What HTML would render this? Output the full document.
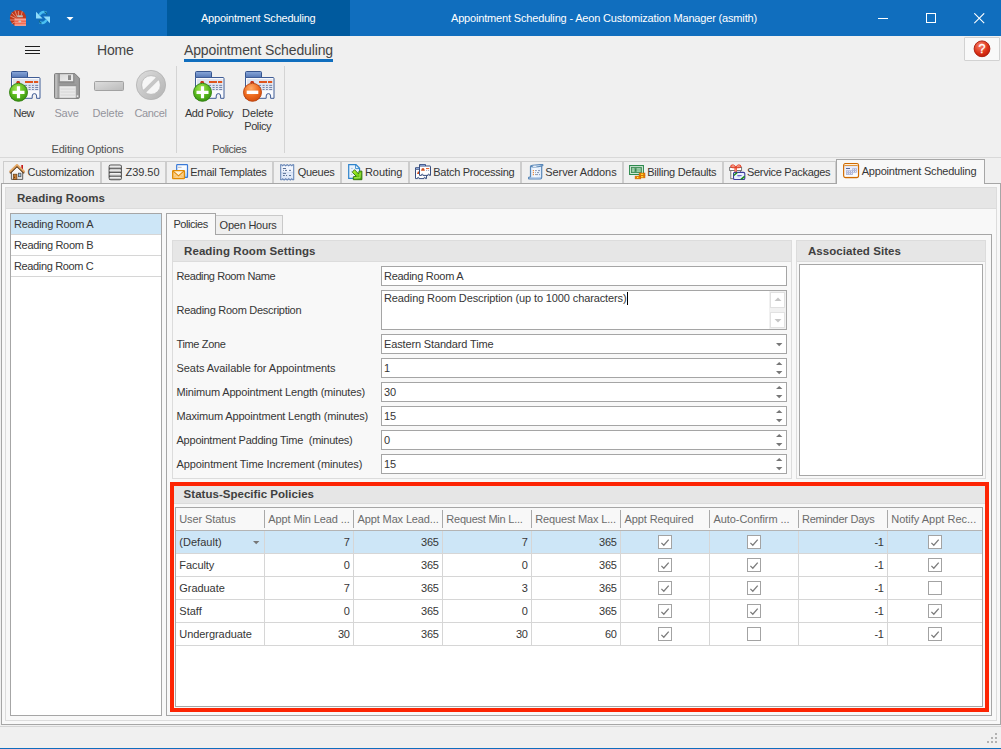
<!DOCTYPE html>
<html><head><meta charset="utf-8"><title>Aeon Customization Manager</title>
<style>
*{box-sizing:border-box;margin:0;padding:0}
html,body{width:1001px;height:749px;overflow:hidden;background:#f0f0f0;font-family:"Liberation Sans",sans-serif;font-size:11px;color:#363636;letter-spacing:-0.18px}
.a{position:absolute}
.t{position:absolute;white-space:pre;line-height:14px}
.w{color:#fff}
.lbl{position:absolute;white-space:nowrap;line-height:14px;text-align:center;transform:translateX(-50%)}
.dis{color:#94949c}
.cap{color:#505050}
.dtab{position:absolute;top:161px;height:22px;border:1px solid #cdcdcd;border-bottom:none;background:#f0f0f0}
.hdr{position:absolute;background:#e6e6e6;border-bottom:1px solid #dcdcdc}
.hdr b{position:absolute;top:3px;font-weight:bold;color:#404040;font-size:11px;line-height:14px;white-space:nowrap;letter-spacing:0.1px}
.inp{position:absolute;background:#fff;border:1px solid #a5a5a5;left:381px;width:406px;height:20px}
.inp span{position:absolute;left:3px;top:3px;line-height:14px;white-space:nowrap}
.fl{position:absolute;left:176px;white-space:nowrap;line-height:14px}
.ch{position:absolute;top:512px;line-height:14px;white-space:nowrap;color:#6b6b6b}
.num{position:absolute;line-height:14px;white-space:nowrap;text-align:right}
.cb{position:absolute;width:14px;height:14px;border:1px solid #a3a3a3;background:#fff}
</style></head><body>
<div class="a" style="left:0;top:0;width:1001px;height:36px;background:#106ebe"></div>
<div class="a" style="left:167px;top:0;width:183px;height:36px;background:#005a9e"></div>
<div class="t w" style="top:11px;letter-spacing:-0.216px;left:201px;">Appointment Scheduling</div>
<div class="t w" style="top:11px;letter-spacing:-0.169px;left:451px;">Appointment Scheduling - Aeon Customization Manager (asmith)</div>
<svg class="a" style="left:9px;top:9px" width="18" height="18" viewBox="0 0 18 18">
<circle cx="9" cy="9" r="8.1" fill="#c0381a"/>
<g stroke="#eeb09c" stroke-width="0.7" stroke-linecap="round"><path d="M6.5 9.5 L1.6 7.2"/><path d="M7 8.4 L3 4"/><path d="M8 7.4 L6 1.8"/><path d="M9.4 6.6 L9.4 2.4"/><path d="M12.2 6.4 L13.2 2.6"/><path d="M6 11 L1.2 11"/><path d="M6 12.6 L3 14.6"/></g>
<rect x="5.6" y="9.6" width="11.4" height="7.2" rx="0.6" fill="#f06a52"/>
<rect x="5.6" y="9.6" width="11.4" height="1.8" fill="#f8a090"/>
<rect x="5.6" y="13.2" width="11.4" height="0.9" fill="#f89484"/>
<rect x="5.6" y="15.4" width="11.4" height="1.4" fill="#f8a898"/>
<rect x="8.2" y="6.3" width="5.6" height="2" fill="#aab4b4"/>
<path d="M8.6 7.3 H13.4" stroke="#e8ecec" stroke-width="0.6" stroke-dasharray="0.8 0.6"/>
<ellipse cx="10.8" cy="12.6" rx="1.5" ry="1" fill="#c4c8c8"/>
</svg>
<svg class="a" style="left:35px;top:10px" width="16" height="16" viewBox="0 0 16 16">
<path d="M4.5 5 Q7 0.6 11.4 2.8" fill="none" stroke="#4ac0f2" stroke-width="2.5"/>
<path d="M9.5 1.6 Q11.6 2.6 11.8 4.6" fill="none" stroke="#15688c" stroke-width="1.2"/>
<path d="M11.5 10 Q9 14.4 4.6 12.2" fill="none" stroke="#4ac0f2" stroke-width="2.5"/>
<path d="M6.5 13.4 Q4.4 12.4 4.2 10.4" fill="none" stroke="#15688c" stroke-width="1.2"/>
<path d="M1 1.8 L1 8.5 L7.6 8.5 Z" fill="#8fdcfa"/>
<path d="M15 13.2 L15 6.5 L8.4 6.5 Z" fill="#8fdcfa"/>
</svg>
<svg class="a" style="left:66px;top:17px" width="8" height="4"><path d="M0.5 0 L7.5 0 L4 3.6 Z" fill="#fff"/></svg>
<div class="a" style="left:878px;top:18px;width:10px;height:1px;background:#fff"></div>
<div class="a" style="left:926px;top:13px;width:10px;height:10px;border:1px solid #fff"></div>
<svg class="a" style="left:974px;top:13px" width="11" height="11"><path d="M0.3 0.3 L10.2 10.2 M10.2 0.3 L0.3 10.2" stroke="#fff" stroke-width="1.1"/></svg>
<div class="a" style="left:0;top:157px;width:1001px;height:1px;background:#d9d9d9"></div>
<div class="a" style="left:25px;top:46px;width:15px;height:1px;background:#1e1e1e"></div>
<div class="a" style="left:25px;top:50px;width:15px;height:1px;background:#1e1e1e"></div>
<div class="a" style="left:25px;top:53px;width:15px;height:1px;background:#1e1e1e"></div>
<div class="t " style="top:42px;font-size:14px;color:#444;line-height:16px;letter-spacing:-0.215px;left:97px;">Home</div>
<div class="t " style="top:42px;font-size:14px;color:#444;line-height:16px;letter-spacing:-0.126px;left:184px;">Appointment Scheduling</div>
<div class="a" style="left:184px;top:59px;width:149px;height:3px;background:#106ebe"></div>
<div class="a" style="left:964px;top:37px;width:36px;height:24px;background:#f9f9f9;border:1px solid #d2d2d2;border-radius:1px"></div>
<svg class="a" style="left:973px;top:40px" width="18" height="18" viewBox="0 0 18 18"><defs><radialGradient id="hg" cx="0.4" cy="0.3" r="0.8"><stop offset="0" stop-color="#f8846a"/><stop offset="0.6" stop-color="#dc3218"/><stop offset="1" stop-color="#b81808"/></radialGradient></defs>
<circle cx="9" cy="8.8" r="7.9" fill="url(#hg)" stroke="#a81a0a" stroke-width="0.9"/>
<text x="9" y="13" font-family="Liberation Sans" font-size="12.5" fill="#fff" text-anchor="middle" letter-spacing="0" stroke="#fff" stroke-width="0.3">?</text></svg>
<svg class="a" style="left:8px;top:70px" width="34" height="32" viewBox="0 0 34 32"><defs><linearGradient id="tba" x1="0" y1="0" x2="0" y2="1"><stop offset="0" stop-color="#8aa8da"/><stop offset="1" stop-color="#5274b2"/></linearGradient><radialGradient id="bga" cx="0.42" cy="0.28" r="0.8"><stop offset="0" stop-color="#a4e650"/><stop offset="0.55" stop-color="#58b81c"/><stop offset="1" stop-color="#338a0e"/></radialGradient></defs><path d="M3.5 8 L3.5 2.5 Q3.5 1.5 4.5 1.5 L18.5 1.5 Q19.5 1.5 19.5 2.5 L19.5 8 Z" fill="url(#tba)" stroke="#36558f" stroke-width="1"/><path d="M3.5 7.5 L31 7.5 Q32 7.5 32 8.5 L32 28.3 L28.6 28.3 L28.6 26 Q28.6 23.6 26.4 23.6 Q24.2 23.6 24.2 26 L24.2 28.3 L3.5 28.3 Z" fill="#f9fafd" stroke="#3f5c95" stroke-width="1"/><rect x="5" y="9" width="25.6" height="11.6" fill="#dfe4ef"/><rect x="17" y="11" width="8" height="2" fill="#e0561e"/><rect x="26" y="11" width="4.2" height="2" fill="#e0561e"/><path d="M8 13 L9 11 L11.4 11 L12.4 13 Z" fill="#c8381a"/><path d="M16 15.4 H30.2" stroke="#6a7aa2" stroke-width="0.9" stroke-dasharray="3 1.6 2 1.4 1.8 1.4"/><path d="M16 17.5 H30.2" stroke="#6a7aa2" stroke-width="0.9" stroke-dasharray="3 1.6 2 1.4 1.8 1.4"/><path d="M16 19.5 H30.2" stroke="#6a7aa2" stroke-width="0.9" stroke-dasharray="3 1.6 2 1.4 1.8 1.4"/><circle cx="10.5" cy="22.3" r="9" fill="url(#bga)" stroke="#2e7e0c" stroke-width="0.9"/><path d="M10.5 16.3 V28.3 M4.5 22.3 H16.5" stroke="#fff" stroke-width="3.2"/></svg>
<svg class="a" style="left:192px;top:70px" width="34" height="32" viewBox="0 0 34 32"><defs><linearGradient id="tbb" x1="0" y1="0" x2="0" y2="1"><stop offset="0" stop-color="#8aa8da"/><stop offset="1" stop-color="#5274b2"/></linearGradient><radialGradient id="bgb" cx="0.42" cy="0.28" r="0.8"><stop offset="0" stop-color="#a4e650"/><stop offset="0.55" stop-color="#58b81c"/><stop offset="1" stop-color="#338a0e"/></radialGradient></defs><path d="M3.5 8 L3.5 2.5 Q3.5 1.5 4.5 1.5 L18.5 1.5 Q19.5 1.5 19.5 2.5 L19.5 8 Z" fill="url(#tbb)" stroke="#36558f" stroke-width="1"/><path d="M3.5 7.5 L31 7.5 Q32 7.5 32 8.5 L32 28.3 L28.6 28.3 L28.6 26 Q28.6 23.6 26.4 23.6 Q24.2 23.6 24.2 26 L24.2 28.3 L3.5 28.3 Z" fill="#f9fafd" stroke="#3f5c95" stroke-width="1"/><rect x="5" y="9" width="25.6" height="11.6" fill="#dfe4ef"/><rect x="17" y="11" width="8" height="2" fill="#e0561e"/><rect x="26" y="11" width="4.2" height="2" fill="#e0561e"/><path d="M8 13 L9 11 L11.4 11 L12.4 13 Z" fill="#c8381a"/><path d="M16 15.4 H30.2" stroke="#6a7aa2" stroke-width="0.9" stroke-dasharray="3 1.6 2 1.4 1.8 1.4"/><path d="M16 17.5 H30.2" stroke="#6a7aa2" stroke-width="0.9" stroke-dasharray="3 1.6 2 1.4 1.8 1.4"/><path d="M16 19.5 H30.2" stroke="#6a7aa2" stroke-width="0.9" stroke-dasharray="3 1.6 2 1.4 1.8 1.4"/><circle cx="10.5" cy="22.3" r="9" fill="url(#bgb)" stroke="#2e7e0c" stroke-width="0.9"/><path d="M10.5 16.3 V28.3 M4.5 22.3 H16.5" stroke="#fff" stroke-width="3.2"/></svg>
<svg class="a" style="left:242px;top:70px" width="34" height="32" viewBox="0 0 34 32"><defs><linearGradient id="tbc" x1="0" y1="0" x2="0" y2="1"><stop offset="0" stop-color="#8aa8da"/><stop offset="1" stop-color="#5274b2"/></linearGradient><radialGradient id="bgc" cx="0.42" cy="0.28" r="0.8"><stop offset="0" stop-color="#ffac6a"/><stop offset="0.55" stop-color="#ee6a1e"/><stop offset="1" stop-color="#cc480a"/></radialGradient></defs><path d="M3.5 8 L3.5 2.5 Q3.5 1.5 4.5 1.5 L18.5 1.5 Q19.5 1.5 19.5 2.5 L19.5 8 Z" fill="url(#tbc)" stroke="#36558f" stroke-width="1"/><path d="M3.5 7.5 L31 7.5 Q32 7.5 32 8.5 L32 28.3 L28.6 28.3 L28.6 26 Q28.6 23.6 26.4 23.6 Q24.2 23.6 24.2 26 L24.2 28.3 L3.5 28.3 Z" fill="#f9fafd" stroke="#3f5c95" stroke-width="1"/><rect x="5" y="9" width="25.6" height="11.6" fill="#dfe4ef"/><rect x="17" y="11" width="8" height="2" fill="#e0561e"/><rect x="26" y="11" width="4.2" height="2" fill="#e0561e"/><path d="M8 13 L9 11 L11.4 11 L12.4 13 Z" fill="#c8381a"/><path d="M16 15.4 H30.2" stroke="#6a7aa2" stroke-width="0.9" stroke-dasharray="3 1.6 2 1.4 1.8 1.4"/><path d="M16 17.5 H30.2" stroke="#6a7aa2" stroke-width="0.9" stroke-dasharray="3 1.6 2 1.4 1.8 1.4"/><path d="M16 19.5 H30.2" stroke="#6a7aa2" stroke-width="0.9" stroke-dasharray="3 1.6 2 1.4 1.8 1.4"/><circle cx="10.5" cy="22.3" r="9" fill="url(#bgc)" stroke="#b8400a" stroke-width="0.9"/><path d="M4.7 22.3 H16.3" stroke="#fff" stroke-width="3.4"/></svg>
<svg class="a" style="left:53px;top:72px" width="28" height="28" viewBox="0 0 28 28">
<defs><linearGradient id="sv" x1="0" y1="0" x2="1" y2="0"><stop offset="0" stop-color="#9a9a9a"/><stop offset="0.06" stop-color="#c6c6c6"/><stop offset="0.14" stop-color="#a0a0a0"/><stop offset="1" stop-color="#9c9c9c"/></linearGradient>
<linearGradient id="sl" x1="0" y1="0" x2="1" y2="1"><stop offset="0" stop-color="#d8d8d8"/><stop offset="1" stop-color="#f0f0f0"/></linearGradient></defs>
<path d="M2.5 1.6 L21.8 1.6 L26.4 6.2 L26.4 25.4 Q26.4 26.4 25.4 26.4 L2.5 26.4 Q1.5 26.4 1.5 25.4 L1.5 2.6 Q1.5 1.6 2.5 1.6 Z" fill="url(#sv)" stroke="#7e7e7e" stroke-width="1"/>
<rect x="5.6" y="1.8" width="15.8" height="9.6" fill="#8c8c8c"/>
<rect x="6.9" y="2.2" width="13.2" height="7" fill="url(#sl)"/>
<rect x="15" y="3.2" width="3" height="4.8" fill="#8a8a8a"/>
<rect x="5.8" y="12.6" width="17.6" height="1.4" fill="#8e8e8e"/>
<rect x="6.2" y="14" width="16.8" height="12" fill="#e9e9e9" stroke="#a4a4a4" stroke-width="0.5"/>
<path d="M7.4 17 H22 M7.4 20 H22 M7.4 23 H22" stroke="#d6d6d6" stroke-width="1"/>
<rect x="23.8" y="23.4" width="1.5" height="1.5" fill="#f2f2f2"/>
</svg>
<svg class="a" style="left:93px;top:80px" width="32" height="12" viewBox="0 0 32 12">
<defs><linearGradient id="dl" x1="0" y1="0" x2="1" y2="1"><stop offset="0" stop-color="#dedede"/><stop offset="1" stop-color="#bababa"/></linearGradient></defs>
<rect x="1.5" y="1.5" width="29" height="9" rx="1" fill="url(#dl)" stroke="#a2a2a2"/></svg>
<svg class="a" style="left:135px;top:69px" width="32" height="32" viewBox="0 0 32 32">
<defs><linearGradient id="cn" x1="0" y1="0" x2="1" y2="1"><stop offset="0" stop-color="#dadada"/><stop offset="1" stop-color="#b6b6b6"/></linearGradient></defs>
<circle cx="16" cy="16" r="12.1" fill="#f6f6f6" stroke="url(#cn)" stroke-width="5.2"/>
<circle cx="16" cy="16" r="14.6" fill="none" stroke="#b4b4b4" stroke-width="0.8"/>
<circle cx="16" cy="16" r="9.4" fill="none" stroke="#b4b4b4" stroke-width="0.8"/>
<path d="M8.8 23.2 L23.2 8.8" stroke="#c6c6c6" stroke-width="3.8"/>
</svg>
<div class="t " style="top:106px;letter-spacing:-0.539px;left:23.7px;transform:translateX(-50%);">New</div>
<div class="t dis" style="top:106px;letter-spacing:-0.27px;left:66.5px;transform:translateX(-50%);">Save</div>
<div class="t dis" style="top:106px;letter-spacing:-0.099px;left:108px;transform:translateX(-50%);">Delete</div>
<div class="t dis" style="top:106px;letter-spacing:-0.375px;left:150.5px;transform:translateX(-50%);">Cancel</div>
<div class="t " style="top:106px;letter-spacing:-0.378px;left:209px;transform:translateX(-50%);">Add Policy</div>
<div class="t " style="top:106px;letter-spacing:-0.099px;left:257.7px;transform:translateX(-50%);">Delete</div>
<div class="t " style="top:119px;letter-spacing:-0.391px;left:257.7px;transform:translateX(-50%);">Policy</div>
<div class="t cap" style="top:142px;letter-spacing:-0.174px;left:87.5px;transform:translateX(-50%);">Editing Options</div>
<div class="t cap" style="top:142px;letter-spacing:-0.488px;left:229.2px;transform:translateX(-50%);">Policies</div>
<div class="a" style="left:176px;top:66px;width:1px;height:87px;background:#d4d4d4"></div>
<div class="a" style="left:284px;top:66px;width:1px;height:87px;background:#d4d4d4"></div>
<div class="a" style="left:1px;top:183px;width:1000px;height:542px;border:1px solid #a6a6a6;background:#f8f8f8"></div>
<div class="a" style="left:0;top:726px;width:1001px;height:1px;background:#d4d4d4"></div>
<div class="dtab" style="left:3px;width:98px"></div>
<div class="t " style="top:165px;letter-spacing:-0.246px;left:27.5px;">Customization</div>
<div class="dtab" style="left:101px;width:65px"></div>
<div class="t " style="top:165px;letter-spacing:-0.042px;left:125.5px;">Z39.50</div>
<div class="dtab" style="left:166px;width:107px"></div>
<div class="t " style="top:165px;letter-spacing:-0.287px;left:190.3px;">Email Templates</div>
<div class="dtab" style="left:273px;width:68px"></div>
<div class="t " style="top:165px;letter-spacing:-0.289px;left:297.7px;">Queues</div>
<div class="dtab" style="left:341px;width:68px"></div>
<div class="t " style="top:165px;letter-spacing:-0.075px;left:365px;">Routing</div>
<div class="dtab" style="left:409px;width:112px"></div>
<div class="t " style="top:165px;letter-spacing:-0.288px;left:433.3px;">Batch Processing</div>
<div class="dtab" style="left:521px;width:102px"></div>
<div class="t " style="top:165px;letter-spacing:-0.058px;left:545.2px;">Server Addons</div>
<div class="dtab" style="left:623px;width:100px"></div>
<div class="t " style="top:165px;letter-spacing:-0.223px;left:647.2px;">Billing Defaults</div>
<div class="dtab" style="left:723px;width:113px"></div>
<div class="t " style="top:165px;letter-spacing:-0.297px;left:747px;">Service Packages</div>
<div class="a" style="left:836px;top:159px;width:149px;height:25px;border:1px solid #a6a6a6;border-bottom:none;background:#f8f8f8"></div>
<div class="t " style="top:164px;letter-spacing:-0.211px;left:861.7px;">Appointment Scheduling</div>
<svg class="a" style="left:9px;top:164px" width="17" height="17" viewBox="0 0 17 17">
<rect x="12.3" y="1" width="1.7" height="4.4" fill="#c41a1a"/>
<path d="M2.4 8 L2.4 15.4 L13.7 15.4 L13.7 8 L8 2.6 Z" fill="#ececec" stroke="#4e4e4e" stroke-width="0.9"/>
<path d="M3 8.4 L8 3.6 L13 8.4 L13 9.6 L3 9.6Z" fill="#f8f8f8"/>
<path d="M0.9 9.2 L8 2.2 L15.2 9.2" fill="none" stroke="#55300e" stroke-width="1.4"/>
<path d="M0.6 8 L8 0.9 L15.5 8" fill="none" stroke="#dc9c58" stroke-width="1.9"/>
<path d="M1.4 6.9 L8 0.5 L14.7 6.9" fill="none" stroke="#f6cf9c" stroke-width="0.5"/>
<rect x="4.3" y="10.2" width="3.6" height="5.2" fill="#c47c34" stroke="#6a3c10" stroke-width="0.7"/>
<rect x="5" y="12.8" width="0.9" height="0.9" fill="#3a2008"/>
<rect x="9.4" y="9.2" width="2.5" height="3.5" fill="#8cc4f4" stroke="#545454" stroke-width="0.8"/>
</svg>
<svg class="a" style="left:108px;top:164px" width="15" height="17" viewBox="0 0 15 17">
<defs><linearGradient id="sg" x1="0" y1="0" x2="0" y2="1"><stop offset="0" stop-color="#fdfdfd"/><stop offset="0.45" stop-color="#e4e4e4"/><stop offset="1" stop-color="#8c8c8c"/></linearGradient></defs>
<rect x="0.6" y="0.6" width="13.3" height="15.6" rx="2.2" fill="#4e4e4e"/>
<rect x="1.5" y="1.4" width="11.5" height="3" rx="1" fill="url(#sg)"/>
<rect x="1.5" y="5.2" width="11.5" height="3" rx="1" fill="url(#sg)"/>
<rect x="1.5" y="9" width="11.5" height="3" rx="1" fill="url(#sg)"/>
<rect x="1.5" y="12.8" width="11.5" height="2.8" rx="1" fill="url(#sg)"/>
</svg>
<svg class="a" style="left:172px;top:164px" width="17" height="16" viewBox="0 0 17 16">
<defs><linearGradient id="eg" x1="0" y1="0" x2="0" y2="1"><stop offset="0" stop-color="#ffffff"/><stop offset="0.4" stop-color="#f4f9ff"/><stop offset="1" stop-color="#9ccdf6"/></linearGradient></defs>
<rect x="4.7" y="0.6" width="10.8" height="12.8" rx="0.6" fill="url(#eg)" stroke="#3a7ad8" stroke-width="1.2"/>
<path d="M6 3.3 H9.6" stroke="#a8a8b0" stroke-width="0.8"/>
<rect x="0.7" y="6.7" width="11.7" height="7.9" rx="0.5" fill="#fbd088" stroke="#e08a00" stroke-width="1.3"/>
<path d="M1.4 7.4 L11.6 7.4 L6.5 11.4 Z" fill="#fff2d8"/>
<path d="M1.2 7.2 L6.5 11.8 L11.8 7.2" fill="none" stroke="#de8a08" stroke-width="1.1"/>
<path d="M1.4 14 L4.6 11 M11.6 14 L8.4 11" stroke="#f0b050" stroke-width="0.6"/>
</svg>
<svg class="a" style="left:280px;top:164px" width="15" height="17" viewBox="0 0 15 17">
<rect x="0.7" y="1.2" width="13" height="14.2" fill="#f2f6fe"/>
<rect x="0.7" y="8" width="13" height="7.2" fill="#dfe8f8"/>
<rect x="0.7" y="7.8" width="13" height="1" fill="#d0dcf0"/>
<path d="M0.7 0.6 V16 M13.7 0.6 V16" stroke="#6a88b8" stroke-width="1.1"/>
<path d="M0.4 0.8 L1.8 0.8 L2.6 1.8 L4.1 0.6 L5.7 1.8 L7.2 0.6 L8.7 1.8 L10.3 0.6 L11.8 1.8 L12.6 0.8 L14 0.8" fill="none" stroke="#6a88b8" stroke-width="1.1"/>
<path d="M0.4 15.8 L1.8 15.8 L2.6 14.8 L4.1 16 L5.7 14.8 L7.2 16 L8.7 14.8 L10.3 16 L11.8 14.8 L12.6 15.8 L14 15.8" fill="none" stroke="#6a88b8" stroke-width="1.1"/>
<path d="M2.9 4.5 H6 M3 6.4 H3.8 M5 6.4 H7 M9 6.4 H11 M2.9 9.4 H6 M3 11.5 H4.8 M6 11.5 H7 M9 11.5 H11" stroke="#4a628a" stroke-width="0.9"/>
</svg>
<svg class="a" style="left:348px;top:164px" width="15" height="17" viewBox="0 0 15 17">
<defs><linearGradient id="rg" x1="0" y1="0" x2="1" y2="1"><stop offset="0" stop-color="#c8fa3a"/><stop offset="0.5" stop-color="#7ad810"/><stop offset="1" stop-color="#3c9c08"/></linearGradient></defs>
<path d="M0.7 0.7 H8 L11.6 4.3 V14.3 H0.7 Z" fill="#eaf3fc" stroke="#2e84cc" stroke-width="1.2"/>
<path d="M7.6 0.9 L7.6 4.6 L11.4 4.6 Z" fill="#fff" stroke="#2e84cc" stroke-width="0.9"/>
<path d="M3 4.4 H4.8 M3 7.4 H4.4 M3 10.4 H4.4" stroke="#a4bcd8" stroke-width="0.8"/>
<path d="M4.3 8.2 L6.5 5.7 L10.7 10 L11 7.1 L13.9 7.1 L13.9 15.7 L5.3 15.7 L5.3 12.7 L8.3 12.4 Z" fill="url(#rg)" stroke="#2e6e0a" stroke-width="0.9" stroke-linejoin="round"/>
<path d="M6.4 13.8 H12 V9" fill="none" stroke="#d8fc90" stroke-width="0.8" opacity="0.8"/>
</svg>
<svg class="a" style="left:415px;top:164px" width="17" height="16" viewBox="0 0 17 16"><g transform="translate(0,3.2)">
<path d="M0.5 2.2 V0.5 H6.5 V2.2 Z" fill="#fff" stroke="#3a5080" stroke-width="1" stroke-linejoin="round"/>
<path d="M0.5 2 H11 Q11.5 2 11.5 2.5 V11.4 H10.4 V10.9 Q10.4 10.1 9.7 10.1 Q9 10.1 9 10.9 V11.4 H3.9 V10.9 Q3.9 10.1 3.2 10.1 Q2.5 10.1 2.5 10.9 V11.4 H0.5 Z" fill="#fff" stroke="#3a5080" stroke-width="1" stroke-linejoin="round"/>
<path d="M1.5 1.3 H6" stroke="#86a4dc" stroke-width="0.9"/>
<path d="M2 6.7 L2.9 4.2 L5 4.2 L5.9 6.7 Z" fill="#d2501e"/>
<path d="M7 4.6 H10.2" stroke="#e0561e" stroke-width="1"/>
<rect x="7.2" y="6" width="0.9" height="0.9" fill="#8494b4"/><rect x="9.2" y="6" width="0.9" height="0.9" fill="#8494b4"/>
</g><g transform="translate(4,0)">
<path d="M0.5 2.2 V0.5 H6.5 V2.2 Z" fill="#fff" stroke="#3a5080" stroke-width="1" stroke-linejoin="round"/>
<path d="M0.5 2 H11 Q11.5 2 11.5 2.5 V11.4 H10.4 V10.9 Q10.4 10.1 9.7 10.1 Q9 10.1 9 10.9 V11.4 H3.9 V10.9 Q3.9 10.1 3.2 10.1 Q2.5 10.1 2.5 10.9 V11.4 H0.5 Z" fill="#fff" stroke="#3a5080" stroke-width="1" stroke-linejoin="round"/>
<path d="M1.5 1.3 H6" stroke="#86a4dc" stroke-width="0.9"/>
<path d="M2 6.7 L2.9 4.2 L5 4.2 L5.9 6.7 Z" fill="#d2501e"/>
<path d="M7 4.6 H10.2" stroke="#e0561e" stroke-width="1"/>
<rect x="7.2" y="6" width="0.9" height="0.9" fill="#8494b4"/><rect x="9.2" y="6" width="0.9" height="0.9" fill="#8494b4"/>
</g></svg>
<svg class="a" style="left:528px;top:164px" width="16" height="17" viewBox="0 0 16 17">
<defs><linearGradient id="sc" x1="0" y1="0" x2="1" y2="0"><stop offset="0" stop-color="#d4e4f8"/><stop offset="0.5" stop-color="#f8fbff"/><stop offset="1" stop-color="#dce9fa"/></linearGradient></defs>
<path d="M2.5 2.4 L2.5 12.9 Q0.5 12.9 0.5 14 Q0.5 15 1.8 15 L12.2 15 Q13.7 15 13.7 13.3 L13.7 1.7 Z" fill="url(#sc)" stroke="#5a88b8" stroke-width="1.2" stroke-linejoin="round"/>
<path d="M2.6 13.4 H13 V14.5 H1.6 Z" fill="#86aad6"/>
<path d="M2.5 2.4 Q2.7 1.4 4.6 1.2 L14.2 0.4 Q15.4 0.7 14.7 1.6 L13.7 1.8 Q8 4 2.5 2.4 Z" fill="#dbe8f8" stroke="#5a88b8" stroke-width="1.1" stroke-linejoin="round"/>
<ellipse cx="6.6" cy="2.2" rx="2" ry="0.55" fill="#fff"/>
<rect x="4.8" y="6" width="1.2" height="1.2" fill="#f08c3c"/><rect x="4.8" y="8" width="1.2" height="1.2" fill="#f08c3c"/><rect x="4.8" y="10" width="1.2" height="1.2" fill="#f08c3c"/>
<path d="M7 6.6 H8.8 M10 6.6 H12 M7 8.6 H7.8 M9 8.6 H11 M7 10.6 H10 M11 10.6 H12" stroke="#7a8aa8" stroke-width="0.9"/>
</svg>
<svg class="a" style="left:629px;top:165px" width="17" height="15" viewBox="0 0 17 15">
<rect x="0.6" y="0.55" width="13.8" height="8.9" fill="#e2f2e6" stroke="#2e8a4e" stroke-width="1.1"/>
<rect x="2.3" y="2.2" width="10.3" height="5.5" fill="#4c9c64" stroke="#2e7e46" stroke-width="0.6"/>
<rect x="3.1" y="3.2" width="2.4" height="3.6" fill="#b4d8bc"/>
<rect x="7.6" y="3.2" width="4" height="3.6" fill="#b4d8bc"/>
<path d="M7.6 4.4 H11.6 M7.6 5.6 H11.6 M3.1 4.8 H5.5" stroke="#6cb080" stroke-width="0.6"/>
<rect x="6.3" y="4.5" width="1" height="1" fill="#1e5e32"/>
<rect x="10.1" y="8" width="5.9" height="2.6" fill="#e87c04" stroke="#d06400" stroke-width="0.5"/>
<rect x="10.1" y="10.6" width="5.9" height="2.3" fill="#e87c04" stroke="#d06400" stroke-width="0.5"/>
<rect x="6.1" y="11.1" width="5.7" height="2.8" fill="#e87c04" stroke="#d06400" stroke-width="0.5"/>
<path d="M12 9.3 H14.2 M12 11.7 H14.2 M8 12.5 H9.6" stroke="#fff200" stroke-width="0.9"/>
<path d="M12.6 9.3 H13.4 M12.6 11.7 H13.4 M8.4 12.5 H9" stroke="#fffbe0" stroke-width="0.7"/>
</svg>
<svg class="a" style="left:729px;top:163px" width="17" height="18" viewBox="0 0 17 18">
<rect x="1.8" y="7.4" width="9.6" height="8.3" fill="#fff" stroke="#6e6e6e" stroke-width="0.9"/>
<rect x="0.6" y="4.5" width="12" height="3" fill="#fff" stroke="#6e6e6e" stroke-width="0.9"/>
<rect x="5.4" y="3.4" width="2.6" height="6" fill="#ee5e46"/>
<path d="M6.7 5.4 V9" stroke="#f8b0a0" stroke-width="0.6"/>
<path transform="translate(0,0.7)" d="M6.8 4 Q2 4.5 1.5 2.7 Q1.7 0.9 4.4 1.2 Q6.3 1.8 6.8 4 Q7.3 1.8 9.2 1.2 Q11.9 0.9 12.1 2.7 Q11.6 4.5 6.8 4 Z" fill="#f07058" stroke="#e23c22" stroke-width="0.9"/>
<path transform="translate(0,0.7)" d="M2.8 2.5 Q4 1.8 5.4 2.6 M8.2 2.6 Q9.6 1.8 10.8 2.5" fill="none" stroke="#fbd0c4" stroke-width="0.7"/>
<rect x="4.5" y="9.4" width="11.3" height="7.1" rx="1.3" fill="#e9f0ff" stroke="#3a3a9c" stroke-width="1.1"/>
<path d="M4.7 12.5 L8.3 9.5 M12 16.4 L15.7 13.3" stroke="#1c8c1c" stroke-width="1.6"/>
<path d="M8.3 12.6 H12.6" stroke="#4a4ac0" stroke-width="0.9"/>
<path d="M8.6 13.7 H10.8" stroke="#9aa4e0" stroke-width="0.7"/>
</svg>
<svg class="a" style="left:843px;top:163px" width="17" height="16" viewBox="0 0 17 16">
<defs><linearGradient id="cg" x1="0" y1="0" x2="0" y2="1"><stop offset="0" stop-color="#e2e8fb"/><stop offset="1" stop-color="#ffffff"/></linearGradient></defs>
<rect x="0.75" y="0.65" width="14.7" height="13.8" rx="1.9" fill="#fff" stroke="#d06a00" stroke-width="1.4"/>
<rect x="1.5" y="1.2" width="13.2" height="1" fill="#fff4e0"/>
<rect x="1.6" y="2.2" width="13" height="1" fill="#d87a10"/>
<rect x="1.5" y="3.2" width="13.2" height="10.4" fill="url(#cg)"/>
<path d="M3 5.5 H7" stroke="#4a5a90" stroke-width="0.9"/>
<g fill="#a2aad2"><rect x="9.3" y="5.3" width="4.5" height="2.1"/><rect x="3" y="7.4" width="10.8" height="2.2"/><rect x="3" y="9.6" width="6.8" height="2.2"/></g>
<rect x="9.950000000000001" y="5.85" width="0.9" height="0.9" fill="#fff"/><rect x="12.15" y="5.85" width="0.9" height="0.9" fill="#fff"/><rect x="3.75" y="8.05" width="0.9" height="0.9" fill="#fff"/><rect x="5.85" y="8.05" width="0.9" height="0.9" fill="#fff"/><rect x="7.95" y="8.05" width="0.9" height="0.9" fill="#fff"/><rect x="9.950000000000001" y="8.05" width="0.9" height="0.9" fill="#fff"/><rect x="12.15" y="8.05" width="0.9" height="0.9" fill="#fff"/><rect x="3.75" y="10.15" width="0.9" height="0.9" fill="#fff"/><rect x="5.85" y="10.15" width="0.9" height="0.9" fill="#fff"/><rect x="7.95" y="10.15" width="0.9" height="0.9" fill="#fff"/>
</svg>
<div class="a" style="left:5px;top:187px;width:992px;height:534px;border:1px solid #dcdcdc;background:#f8f8f8"></div>
<div class="hdr" style="left:6px;top:188px;width:990px;height:21px"></div>
<div class="t " style="top:191px;font-size:11.5px;font-weight:bold;color:#404040;letter-spacing:0.035px;left:17px;">Reading Rooms</div>
<div class="a" style="left:10px;top:213px;width:152px;height:503px;border:1px solid #a6a6a6;background:#fff"></div>
<div class="a" style="left:11px;top:214px;width:150px;height:21px;background:#cde6f7"></div>
<div class="a" style="left:11px;top:234px;width:150px;height:1px;background:#d6d6d6"></div>
<div class="t " style="top:217px;letter-spacing:-0.277px;left:14px;">Reading Room A</div>
<div class="a" style="left:11px;top:255px;width:150px;height:1px;background:#d6d6d6"></div>
<div class="t " style="top:238px;letter-spacing:-0.32px;left:14px;">Reading Room B</div>
<div class="a" style="left:11px;top:276px;width:150px;height:1px;background:#d6d6d6"></div>
<div class="t " style="top:259px;letter-spacing:-0.363px;left:14px;">Reading Room C</div>
<div class="a" style="left:215px;top:215px;width:68px;height:20px;border:1px solid #c9c9c9;background:#efefef"></div>
<div class="a" style="left:166px;top:234px;width:826px;height:482px;border:1px solid #a6a6a6;background:#f8f8f8"></div>
<div class="a" style="left:166px;top:213px;width:50px;height:22px;border:1px solid #a6a6a6;border-bottom:none;background:#f8f8f8"></div>
<div class="t " style="top:217px;letter-spacing:-0.463px;left:173.5px;">Policies</div>
<div class="t " style="top:218px;letter-spacing:-0.231px;left:219.6px;">Open Hours</div>
<div class="a" style="left:172px;top:240px;width:620px;height:239px;border:1px solid #dcdcdc;background:#f8f8f8"></div>
<div class="hdr" style="left:173px;top:241px;width:618px;height:21px"></div>
<div class="t " style="top:244px;font-size:11.5px;font-weight:bold;color:#404040;letter-spacing:0.09px;left:184px;">Reading Room Settings</div>
<div class="a" style="left:796px;top:240px;width:190px;height:239px;border:1px solid #dcdcdc;background:#f8f8f8"></div>
<div class="hdr" style="left:797px;top:241px;width:188px;height:21px"></div>
<div class="t " style="top:244px;font-size:11.5px;font-weight:bold;color:#404040;letter-spacing:0.06px;left:808px;">Associated Sites</div>
<div class="a" style="left:799px;top:264px;width:184px;height:212px;border:1px solid #a6a6a6;background:#fff"></div>
<div class="t " style="top:269px;letter-spacing:-0.422px;left:176.5px;">Reading Room Name</div>
<div class="inp" style="top:266px;height:20px"></div>
<div class="t " style="top:269px;letter-spacing:-0.277px;left:384px;">Reading Room A</div>
<div class="t " style="top:303px;letter-spacing:-0.277px;left:176.5px;">Reading Room Description</div>
<div class="inp" style="top:290px;height:40px"></div>
<div class="t " style="top:291px;letter-spacing:-0.12px;left:384px;">Reading Room Description (up to 1000 characters)</div>
<div class="t " style="top:337px;letter-spacing:-0.352px;left:176.5px;">Time Zone</div>
<div class="inp" style="top:334px;height:20px"></div>
<div class="t " style="top:337px;letter-spacing:-0.144px;left:384px;">Eastern Standard Time</div>
<svg class="a" style="left:776px;top:343px" width="7" height="4"><path d="M0 0 L6.4 0 L3.2 3.3 Z" fill="#777"/></svg>
<div class="t " style="top:361px;letter-spacing:-0.051px;left:176.5px;">Seats Available for Appointments</div>
<div class="inp" style="top:358px;height:20px"></div>
<div class="t " style="top:361px;left:384px;">1</div>
<svg class="a" style="left:776px;top:362px" width="7" height="13"><path d="M0 3.1 L6.4 3.1 L3.2 0 Z M0 9 L6.4 9 L3.2 12.2 Z" fill="#777"/></svg>
<div class="t " style="top:385px;letter-spacing:-0.165px;left:176.5px;">Minimum Appointment Length (minutes)</div>
<div class="inp" style="top:382px;height:20px"></div>
<div class="t " style="top:385px;left:384px;">30</div>
<svg class="a" style="left:776px;top:386px" width="7" height="13"><path d="M0 3.1 L6.4 3.1 L3.2 0 Z M0 9 L6.4 9 L3.2 12.2 Z" fill="#777"/></svg>
<div class="t " style="top:409px;letter-spacing:-0.166px;left:176.5px;">Maximum Appointment Length (minutes)</div>
<div class="inp" style="top:406px;height:20px"></div>
<div class="t " style="top:409px;left:384px;">15</div>
<svg class="a" style="left:776px;top:410px" width="7" height="13"><path d="M0 3.1 L6.4 3.1 L3.2 0 Z M0 9 L6.4 9 L3.2 12.2 Z" fill="#777"/></svg>
<div class="t " style="top:433px;letter-spacing:-0.23px;left:176.5px;">Appointment Padding Time  (minutes)</div>
<div class="inp" style="top:430px;height:20px"></div>
<div class="t " style="top:433px;left:384px;">0</div>
<svg class="a" style="left:776px;top:434px" width="7" height="13"><path d="M0 3.1 L6.4 3.1 L3.2 0 Z M0 9 L6.4 9 L3.2 12.2 Z" fill="#777"/></svg>
<div class="t " style="top:457px;letter-spacing:-0.104px;left:176.5px;">Appointment Time Increment (minutes)</div>
<div class="inp" style="top:454px;height:20px"></div>
<div class="t " style="top:457px;left:384px;">15</div>
<svg class="a" style="left:776px;top:458px" width="7" height="13"><path d="M0 3.1 L6.4 3.1 L3.2 0 Z M0 9 L6.4 9 L3.2 12.2 Z" fill="#777"/></svg>
<div class="a" style="left:769px;top:291px;width:17px;height:38px;background:#f1f1f1"></div>
<div class="a" style="left:770px;top:292px;width:15px;height:16px;border:1px solid #e0e0e0;background:#fff"></div>
<div class="a" style="left:770px;top:312px;width:15px;height:16px;border:1px solid #e2e2e2;background:#fff"></div>
<svg class="a" style="left:774px;top:297px" width="8" height="4"><path d="M0.5 4 L7.5 4 L4 0.4 Z" fill="#c6c6c6"/></svg>
<svg class="a" style="left:774px;top:319px" width="8" height="4"><path d="M0.5 0 L7.5 0 L4 3.6 Z" fill="#c6c6c6"/></svg>
<div class="a" style="left:627px;top:292px;width:1px;height:13px;background:#000"></div>
<div class="a" style="left:170px;top:482px;width:819px;height:230px;border:4px solid #fd2403;background:#f8f8f8"></div>
<div class="hdr" style="left:174px;top:486px;width:811px;height:18px"></div>
<div class="t " style="top:487px;font-size:11.5px;font-weight:bold;color:#404040;letter-spacing:0.027px;left:183.6px;">Status-Specific Policies</div>
<div class="a" style="left:175px;top:507px;width:808px;height:200px;border:1px solid #a6a6a6;background:#fff"></div>
<div class="a" style="left:176px;top:508px;width:806px;height:22px;background:#f8f8f8"></div>
<div class="a" style="left:176px;top:530px;width:806px;height:1px;background:#b4b4b4"></div>
<div class="a" style="left:176px;top:531px;width:806px;height:22px;background:#cde6f7"></div>
<div class="t " style="top:512px;color:#6b6b6b;letter-spacing:-0.097px;left:179.2px;">User Status</div>
<div class="t " style="top:512px;color:#6b6b6b;letter-spacing:-0.104px;left:268.3px;">Appt Min Lead ...</div>
<div class="t " style="top:512px;color:#6b6b6b;letter-spacing:-0.136px;left:357.6px;">Appt Max Lead...</div>
<div class="t " style="top:512px;color:#6b6b6b;letter-spacing:-0.237px;left:446.3px;">Request Min L...</div>
<div class="t " style="top:512px;color:#6b6b6b;letter-spacing:-0.16px;left:535.3px;">Request Max L...</div>
<div class="t " style="top:512px;color:#6b6b6b;letter-spacing:-0.118px;left:624.6px;">Appt Required</div>
<div class="t " style="top:512px;color:#6b6b6b;letter-spacing:-0.064px;left:713.5px;">Auto-Confirm ...</div>
<div class="t " style="top:512px;color:#6b6b6b;letter-spacing:-0.247px;left:802px;">Reminder Days</div>
<div class="t " style="top:512px;color:#6b6b6b;letter-spacing:0.001px;left:891.2px;">Notify Appt Rec...</div>
<div class="a" style="left:264px;top:510px;width:1px;height:18px;background:#a9a9a9"></div>
<div class="a" style="left:264px;top:531px;width:1px;height:115px;background:#d6d6d6"></div>
<div class="a" style="left:353px;top:510px;width:1px;height:18px;background:#a9a9a9"></div>
<div class="a" style="left:353px;top:531px;width:1px;height:115px;background:#d6d6d6"></div>
<div class="a" style="left:442px;top:510px;width:1px;height:18px;background:#a9a9a9"></div>
<div class="a" style="left:442px;top:531px;width:1px;height:115px;background:#d6d6d6"></div>
<div class="a" style="left:531px;top:510px;width:1px;height:18px;background:#a9a9a9"></div>
<div class="a" style="left:531px;top:531px;width:1px;height:115px;background:#d6d6d6"></div>
<div class="a" style="left:620px;top:510px;width:1px;height:18px;background:#a9a9a9"></div>
<div class="a" style="left:620px;top:531px;width:1px;height:115px;background:#d6d6d6"></div>
<div class="a" style="left:709px;top:510px;width:1px;height:18px;background:#a9a9a9"></div>
<div class="a" style="left:709px;top:531px;width:1px;height:115px;background:#d6d6d6"></div>
<div class="a" style="left:798px;top:510px;width:1px;height:18px;background:#a9a9a9"></div>
<div class="a" style="left:798px;top:531px;width:1px;height:115px;background:#d6d6d6"></div>
<div class="a" style="left:887px;top:510px;width:1px;height:18px;background:#a9a9a9"></div>
<div class="a" style="left:887px;top:531px;width:1px;height:115px;background:#d6d6d6"></div>
<div class="a" style="left:176px;top:553px;width:806px;height:1px;background:#d6d6d6"></div>
<div class="a" style="left:176px;top:576px;width:806px;height:1px;background:#d6d6d6"></div>
<div class="a" style="left:176px;top:599px;width:806px;height:1px;background:#d6d6d6"></div>
<div class="a" style="left:176px;top:622px;width:806px;height:1px;background:#d6d6d6"></div>
<div class="a" style="left:176px;top:645px;width:806px;height:1px;background:#d6d6d6"></div>
<div class="t " style="top:535px;letter-spacing:0.024px;left:179.3px;">(Default)</div>
<div class="t " style="top:535px;right:651.2px;">7</div>
<div class="t " style="top:535px;right:562.2px;">365</div>
<div class="t " style="top:535px;right:473.20000000000005px;">7</div>
<div class="t " style="top:535px;right:384.20000000000005px;">365</div>
<div class="t " style="top:535px;right:117.20000000000005px;">-1</div>
<div class="cb" style="left:658px;top:535px"><svg width="12" height="12" viewBox="0 0 12 12" style="position:absolute;left:0;top:0"><path d="M2.4 6.9 L4.8 9.2 L9.7 3.6" fill="none" stroke="#7c7c7c" stroke-width="1.3"/></svg></div>
<div class="cb" style="left:747px;top:535px"><svg width="12" height="12" viewBox="0 0 12 12" style="position:absolute;left:0;top:0"><path d="M2.4 6.9 L4.8 9.2 L9.7 3.6" fill="none" stroke="#7c7c7c" stroke-width="1.3"/></svg></div>
<div class="cb" style="left:928px;top:535px"><svg width="12" height="12" viewBox="0 0 12 12" style="position:absolute;left:0;top:0"><path d="M2.4 6.9 L4.8 9.2 L9.7 3.6" fill="none" stroke="#7c7c7c" stroke-width="1.3"/></svg></div>
<div class="t " style="top:558px;letter-spacing:-0.067px;left:179.3px;">Faculty</div>
<div class="t " style="top:558px;right:651.2px;">0</div>
<div class="t " style="top:558px;right:562.2px;">365</div>
<div class="t " style="top:558px;right:473.20000000000005px;">0</div>
<div class="t " style="top:558px;right:384.20000000000005px;">365</div>
<div class="t " style="top:558px;right:117.20000000000005px;">-1</div>
<div class="cb" style="left:658px;top:558px"><svg width="12" height="12" viewBox="0 0 12 12" style="position:absolute;left:0;top:0"><path d="M2.4 6.9 L4.8 9.2 L9.7 3.6" fill="none" stroke="#7c7c7c" stroke-width="1.3"/></svg></div>
<div class="cb" style="left:747px;top:558px"><svg width="12" height="12" viewBox="0 0 12 12" style="position:absolute;left:0;top:0"><path d="M2.4 6.9 L4.8 9.2 L9.7 3.6" fill="none" stroke="#7c7c7c" stroke-width="1.3"/></svg></div>
<div class="cb" style="left:928px;top:558px"><svg width="12" height="12" viewBox="0 0 12 12" style="position:absolute;left:0;top:0"><path d="M2.4 6.9 L4.8 9.2 L9.7 3.6" fill="none" stroke="#7c7c7c" stroke-width="1.3"/></svg></div>
<div class="t " style="top:581px;letter-spacing:-0.059px;left:179.3px;">Graduate</div>
<div class="t " style="top:581px;right:651.2px;">7</div>
<div class="t " style="top:581px;right:562.2px;">365</div>
<div class="t " style="top:581px;right:473.20000000000005px;">3</div>
<div class="t " style="top:581px;right:384.20000000000005px;">365</div>
<div class="t " style="top:581px;right:117.20000000000005px;">-1</div>
<div class="cb" style="left:658px;top:581px"><svg width="12" height="12" viewBox="0 0 12 12" style="position:absolute;left:0;top:0"><path d="M2.4 6.9 L4.8 9.2 L9.7 3.6" fill="none" stroke="#7c7c7c" stroke-width="1.3"/></svg></div>
<div class="cb" style="left:747px;top:581px"><svg width="12" height="12" viewBox="0 0 12 12" style="position:absolute;left:0;top:0"><path d="M2.4 6.9 L4.8 9.2 L9.7 3.6" fill="none" stroke="#7c7c7c" stroke-width="1.3"/></svg></div>
<div class="cb" style="left:928px;top:581px"></div>
<div class="t " style="top:604px;letter-spacing:-0.008px;left:179.3px;">Staff</div>
<div class="t " style="top:604px;right:651.2px;">0</div>
<div class="t " style="top:604px;right:562.2px;">365</div>
<div class="t " style="top:604px;right:473.20000000000005px;">0</div>
<div class="t " style="top:604px;right:384.20000000000005px;">365</div>
<div class="t " style="top:604px;right:117.20000000000005px;">-1</div>
<div class="cb" style="left:658px;top:604px"><svg width="12" height="12" viewBox="0 0 12 12" style="position:absolute;left:0;top:0"><path d="M2.4 6.9 L4.8 9.2 L9.7 3.6" fill="none" stroke="#7c7c7c" stroke-width="1.3"/></svg></div>
<div class="cb" style="left:747px;top:604px"><svg width="12" height="12" viewBox="0 0 12 12" style="position:absolute;left:0;top:0"><path d="M2.4 6.9 L4.8 9.2 L9.7 3.6" fill="none" stroke="#7c7c7c" stroke-width="1.3"/></svg></div>
<div class="cb" style="left:928px;top:604px"><svg width="12" height="12" viewBox="0 0 12 12" style="position:absolute;left:0;top:0"><path d="M2.4 6.9 L4.8 9.2 L9.7 3.6" fill="none" stroke="#7c7c7c" stroke-width="1.3"/></svg></div>
<div class="t " style="top:627px;letter-spacing:-0.061px;left:179.3px;">Undergraduate</div>
<div class="t " style="top:627px;right:651.2px;">30</div>
<div class="t " style="top:627px;right:562.2px;">365</div>
<div class="t " style="top:627px;right:473.20000000000005px;">30</div>
<div class="t " style="top:627px;right:384.20000000000005px;">60</div>
<div class="t " style="top:627px;right:117.20000000000005px;">-1</div>
<div class="cb" style="left:658px;top:627px"><svg width="12" height="12" viewBox="0 0 12 12" style="position:absolute;left:0;top:0"><path d="M2.4 6.9 L4.8 9.2 L9.7 3.6" fill="none" stroke="#7c7c7c" stroke-width="1.3"/></svg></div>
<div class="cb" style="left:747px;top:627px"></div>
<div class="cb" style="left:928px;top:627px"><svg width="12" height="12" viewBox="0 0 12 12" style="position:absolute;left:0;top:0"><path d="M2.4 6.9 L4.8 9.2 L9.7 3.6" fill="none" stroke="#7c7c7c" stroke-width="1.3"/></svg></div>
<svg class="a" style="left:253px;top:541px" width="7" height="4"><path d="M0 0 L6.4 0 L3.2 3.3 Z" fill="#777"/></svg>
<div class="a" style="left:0;top:748px;width:1001px;height:1px;background:#106ebe"></div>
<div class="a" style="left:995px;top:733px;width:2px;height:2px;background:#b2b2b2"></div>
<div class="a" style="left:991px;top:737px;width:2px;height:2px;background:#b2b2b2"></div>
<div class="a" style="left:995px;top:737px;width:2px;height:2px;background:#b2b2b2"></div>
<div class="a" style="left:987px;top:741px;width:2px;height:2px;background:#b2b2b2"></div>
<div class="a" style="left:991px;top:741px;width:2px;height:2px;background:#b2b2b2"></div>
<div class="a" style="left:995px;top:741px;width:2px;height:2px;background:#b2b2b2"></div>
</body></html>
